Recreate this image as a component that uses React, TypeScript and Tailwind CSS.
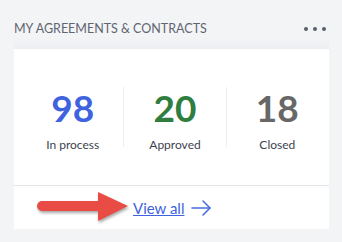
import { Fragment } from 'react';

type Stat = {
  value: number;
  label: string;
  color: string;
};

const stats: Stat[] = [
  { value: 98, label: 'In process', color: 'text-[#3f63de]' },
  { value: 20, label: 'Approved', color: 'text-[#2f7d3f]' },
  { value: 18, label: 'Closed', color: 'text-[#676767]' },
];

function StatItem({ value, label, color }: Readonly<Stat>) {
  return (
    <div className="flex flex-1 flex-col items-center pt-[2px]">
      <span className={`text-[37px] font-bold leading-none ${color}`}>{value}</span>
      <span className="mt-[11px] text-[12px] leading-[15px] text-[#3d4350]">{label}</span>
    </div>
  );
}

function PointerArrow() {
  return (
    <svg width="92" height="32" viewBox="0 0 92 32" className="drop-shadow-[1px_2px_1.5px_rgba(0,0,0,0.35)]">
      <rect x="0" y="9" width="66" height="10" rx="5" fill="#e84c44" />
      <polygon points="61,0 91,14 61,29" fill="#e84c44" />
    </svg>
  );
}

function LinkArrow() {
  return (
    <svg width="20" height="16" viewBox="0 0 20 16" fill="none" stroke="#4a6fe0" strokeWidth="1.6" strokeLinecap="round" strokeLinejoin="round">
      <path d="M1 8H19" />
      <path d="M12 1L19 8L12 15" />
    </svg>
  );
}

export default function App() {
  return (
    <div className="h-[242px] w-[342px] bg-[#f3f4f6] font-['Lato','Liberation_Sans',sans-serif]">
      <div className="flex h-[37px] items-end justify-between pl-[14px] pr-[16px]">
        <h2 className="text-[12.5px] leading-[16px] text-[#5f6571]">MY AGREEMENTS &amp; CONTRACTS</h2>
        <div className="mb-[6px] flex gap-[5px]">
          <span className="h-[4px] w-[4px] rounded-full bg-[#5a606b]" />
          <span className="h-[4px] w-[4px] rounded-full bg-[#5a606b]" />
          <span className="h-[4px] w-[4px] rounded-full bg-[#5a606b]" />
        </div>
      </div>
      <div className="mx-[14px] h-[12px] w-[315px] bg-gradient-to-b from-[#f3f4f6] to-[#eceef1]" />
      <div className="ml-[14px] flex w-[315px] flex-col bg-white">
        <div className="flex h-[136px] items-start pl-[8px] pr-[1px] pt-[38px]">
          {stats.map((s, i) => (
            <Fragment key={s.label}>
              {i > 0 && <div className="h-[60px] w-px bg-[#eceef0]" />}
              <StatItem {...s} />
            </Fragment>
          ))}
        </div>
        <div className="h-px bg-[#e2e5ea]" />
        <div className="flex h-[43px] items-center pl-[23px]">
          <PointerArrow />
          <a href="#" className="ml-[4px] text-[15px] leading-[18px] text-[#3f63de] underline">
            View all
          </a>
          <span className="ml-[7px]">
            <LinkArrow />
          </span>
        </div>
      </div>
    </div>
  );
}
